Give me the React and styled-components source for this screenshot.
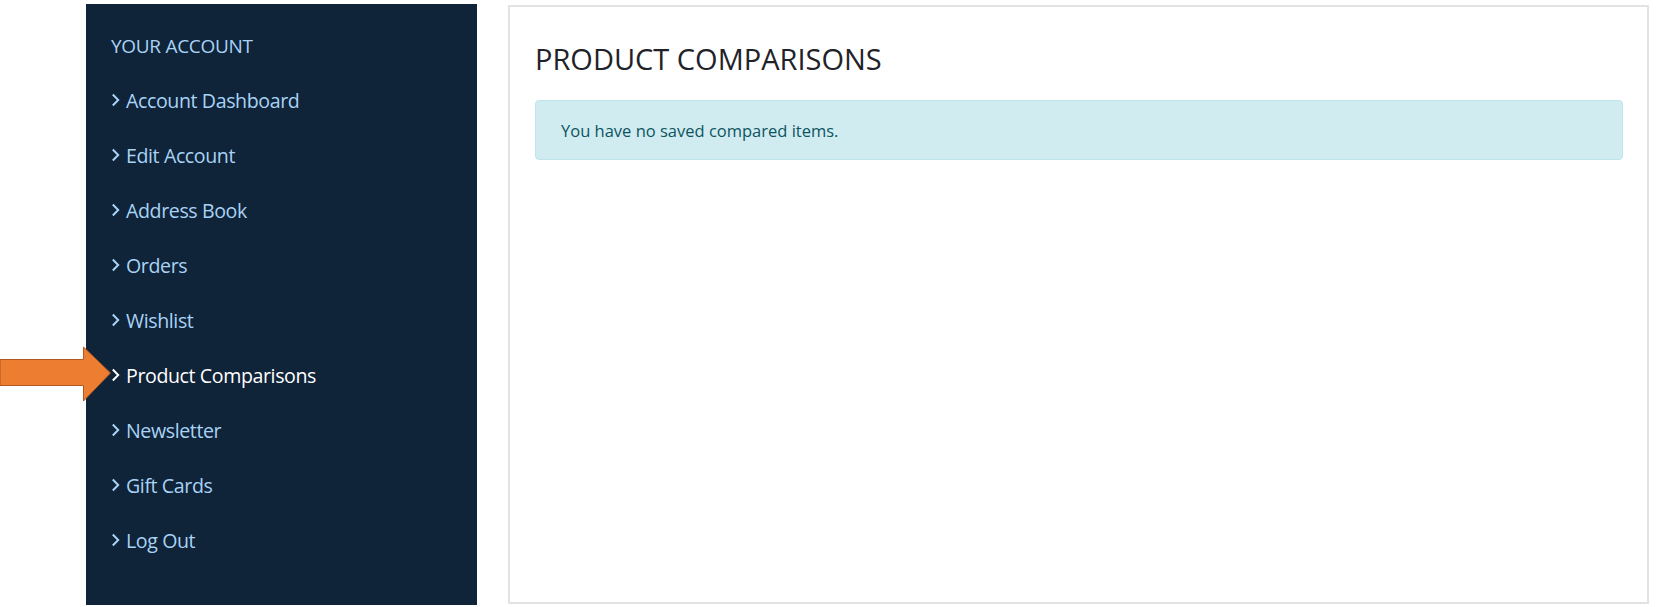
import React from "react";
import styled, { createGlobalStyle } from "styled-components";

const Global = createGlobalStyle`
  html, body { margin: 0; padding: 0; background: #ffffff; }
  body { font-family: "Open Sans", "Noto Sans", Arial, sans-serif; }
`;

const Page = styled.div`
  position: relative;
  display: flex;
  gap: 31px;
  padding: 4px 10px 2px 86px;
  height: 607px;
  box-sizing: border-box;
`;

const Sidebar = styled.nav`
  width: 391px;
  height: 601px;
  background: #0f2339;
  box-sizing: border-box;
  padding: 29px 0 0 25px;
  display: flex;
  flex-direction: column;
`;

const SideTitle = styled.div`
  color: #a9d3f5;
  font-size: 19px;
  letter-spacing: -0.3px;
  line-height: 26px;
  margin-bottom: 28px;
`;

const NavItem = styled.a`
  display: flex;
  align-items: center;
  gap: 6px;
  height: 55px;
  margin-top: -14px;
  margin-bottom: 14px;
  color: ${(p) => (p.$active ? "#ffffff" : "#a9d3f5")};
  font-size: 19.6px;
  letter-spacing: -0.4px;
  text-decoration: none;
  cursor: pointer;
`;

const Chev = styled.svg`
  width: 9px;
  height: 14px;
  margin-top: -2px;
  flex: none;
`;

const Main = styled.main`
  flex: 1;
  height: 599px;
  margin-top: 1px;
  border: 2px solid #e3e3e3;
  box-sizing: border-box;
  padding: 33px 24px 0 25px;
`;

const Title = styled.h1`
  margin: 0 0 22px 0;
  font-weight: 400;
  font-size: 29px;
  letter-spacing: 0;
  line-height: 38px;
  color: #1f2329;
`;

const Alert = styled.div`
  height: 60px;
  box-sizing: border-box;
  background: #d1ecf1;
  border: 1px solid #bee5eb;
  border-radius: 4px;
  color: #0c5460;
  font-size: 16.5px;
  letter-spacing: 0;
  display: flex;
  align-items: center;
  padding-left: 25px;
`;

const Arrow = styled.svg`
  position: absolute;
  left: 0;
  top: 346px;
  width: 112px;
  height: 57px;
`;

const items = [
  "Account Dashboard",
  "Edit Account",
  "Address Book",
  "Orders",
  "Wishlist",
  "Product Comparisons",
  "Newsletter",
  "Gift Cards",
  "Log Out",
];

export default function App() {
  return (
    <>
      <Global />
      <Page>
        <Sidebar>
          <SideTitle>YOUR ACCOUNT</SideTitle>
          {items.map((it) => (
            <NavItem key={it} $active={it === "Product Comparisons"}>
              <Chev viewBox="0 0 9 14">
                <path d="M1.8 1.5 L7.2 7 L1.8 12.5" fill="none" stroke="currentColor" strokeWidth="2" />
              </Chev>
              {it}
            </NavItem>
          ))}
        </Sidebar>
        <Main>
          <Title>PRODUCT COMPARISONS</Title>
          <Alert>You have no saved compared items.</Alert>
        </Main>
        <Arrow viewBox="0 0 112 57">
          <path
            d="M0 13.5 L83.5 13.5 L83.5 1 L110.5 27 L83.5 55 L83.5 39.5 L0 39.5 Z"
            fill="#ed7d31"
            stroke="#ae5a21"
            strokeWidth="1"
          />
        </Arrow>
      </Page>
    </>
  );
}
